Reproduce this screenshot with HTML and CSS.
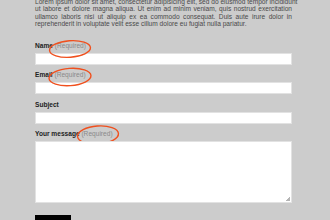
FILE: index.html
```html
<!DOCTYPE html>
<html>
<head>
<meta charset="utf-8">
<link rel="stylesheet" href="styles.css">
</head>
<body>
<div class="page">
  <p class="intro"><span class="ln">Lorem ipsum dolor sit amet, consectetur adipisicing elit, sed do eiusmod tempor incididunt</span> <span class="ln">ut labore et dolore magna aliqua. Ut enim ad minim veniam, quis nostrud exercitation</span> <span class="ln">ullamco laboris nisi ut aliquip ex ea commodo consequat. Duis aute irure dolor in</span> <span class="ln last">reprehenderit in voluptate velit esse cillum dolore eu fugiat nulla pariatur.</span></p>
  <form class="form">
    <div class="field">
      <label class="label">Name <span class="req">(Required)</span>
        <svg class="ring ring-name" width="48" height="22" viewBox="0 0 48 22"><ellipse cx="24" cy="11" rx="20.5" ry="8.3" transform="rotate(-4 24 11)"/></svg>
      </label>
      <input class="input" type="text">
    </div>
    <div class="field">
      <label class="label">Email <span class="req">(Required)</span>
        <svg class="ring ring-email" width="48" height="22" viewBox="0 0 48 22"><ellipse cx="24" cy="11" rx="21" ry="8.6" transform="rotate(-4 24 11)"/></svg>
      </label>
      <input class="input" type="text">
    </div>
    <div class="field">
      <label class="label">Subject</label>
      <input class="input" type="text">
    </div>
    <div class="field">
      <label class="label">Your message <span class="req">(Required)</span>
        <svg class="ring ring-msg" width="48" height="22" viewBox="0 0 48 22"><ellipse cx="24" cy="11" rx="20.5" ry="9" transform="rotate(-4 24 11)"/></svg>
      </label>
      <div class="area-wrap">
        <textarea class="textarea"></textarea>
        <span class="grip"></span>
      </div>
    </div>
    <button class="submit" type="button" aria-label="Submit"></button>
  </form>
</div>
</body>
</html>
```
FILE: styles.css
```css
html, body {
  margin: 0;
  padding: 0;
  background: #cccccc;
  overflow: hidden;
}
.page {
  width: 257px;
  padding-left: 35px;
  font-family: "Liberation Sans", Arial, sans-serif;
}
.intro {
  margin: -2.3px 0 0 0;
  font-size: 6.6px;
  line-height: 7.6px;
  color: #4a4a4a;
}
.ln {
  display: block;
  white-space: nowrap;
  text-align: justify;
  text-align-last: justify;
}
.ln.last {
  text-align-last: left;
}
.form {
  margin: 13.5px 0 0 0;
  display: flex;
  flex-direction: column;
}
.field {
  display: flex;
  flex-direction: column;
  margin-bottom: 6.5px;
}
.label {
  position: relative;
  font-size: 6.6px;
  line-height: 8px;
  font-weight: bold;
  color: #222;
  margin-bottom: 3px;
}
.req {
  font-weight: normal;
  color: #8a8a8a;
}
.ring {
  position: absolute;
  fill: none;
  stroke: #f0501e;
  stroke-width: 1.4;
}
.ring-name { left: 11px; top: -4px; }
.ring-email { left: 10.5px; top: -5.5px; }
.ring-msg { left: 38.5px; top: -6.5px; }
.input {
  box-sizing: border-box;
  width: 257px;
  height: 12px;
  margin: 0;
  padding: 0;
  background: #fff;
  border: 1px solid #e2e2e2;
  outline: none;
}
.area-wrap {
  position: relative;
  width: 257px;
  height: 62px;
}
.textarea {
  display: block;
  box-sizing: border-box;
  width: 257px;
  height: 62px;
  margin: 0;
  padding: 0;
  background: #fff;
  border: 1px solid #e2e2e2;
  resize: none;
  outline: none;
}
.grip {
  position: absolute;
  right: 2px;
  bottom: 2px;
  width: 4px;
  height: 4px;
  background: linear-gradient(135deg, transparent 50%, #b5b5b5 50%);
}
.field:last-of-type {
  margin-bottom: 12px;
}
.submit {
  align-self: flex-start;
  width: 36px;
  height: 16px;
  margin: 0;
  padding: 0;
  border: 0;
  background: #000;
}
```
